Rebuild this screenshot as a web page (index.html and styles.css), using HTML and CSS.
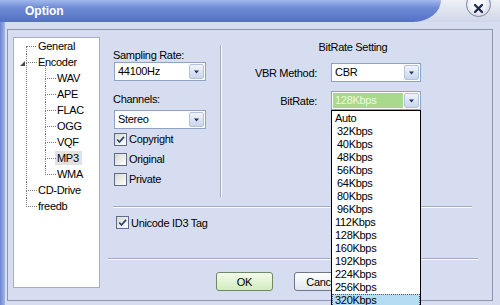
FILE: index.html
```html
<!DOCTYPE html>
<html lang="en">
<head>
    <meta charset="UTF-8">
    <title>Option</title>
    <link rel="stylesheet" href="styles.css">
</head>
<body>
    <div class="window">
        <div class="titlebar">
            <div class="caption">Option</div>
            <div class="close-area">
                <span class="close">
                    <svg width="11" height="11" viewBox="0 0 11 11"><path d="M2 2 L9 9 M9 2 L2 9" stroke="#1f2b4c" stroke-width="2.3" stroke-linecap="round"/></svg>
                </span>
            </div>
        </div>
        <div class="client">
            <div class="edge"></div>
            <div class="frame">
                <div class="tree">
                    <ul class="root">
                        <li>General</li>
                        <li><span class="expander"></span>Encoder
                            <ul class="children">
                                <li>WAV</li>
                                <li>APE</li>
                                <li>FLAC</li>
                                <li>OGG</li>
                                <li>VQF</li>
                                <li><span class="selected">MP3</span></li>
                                <li>WMA</li>
                            </ul>
                        </li>
                        <li>CD-Drive</li>
                        <li>freedb</li>
                    </ul>
                </div>

                <div class="pages">
                    <div class="settings">
                        <div class="col-left">
                            <div class="label">Sampling Rate:</div>
                            <div class="select">
                                <span class="value">44100Hz</span>
                                <span class="drop-btn"><svg width="5" height="4" viewBox="0 0 5 4"><path d="M0 0.5 L5 0.5 L2.5 3.5 Z" fill="#27365e"/></svg></span>
                            </div>
                            <div class="label channels">Channels:</div>
                            <div class="select stereo">
                                <span class="value">Stereo</span>
                                <span class="drop-btn"><svg width="5" height="4" viewBox="0 0 5 4"><path d="M0 0.5 L5 0.5 L2.5 3.5 Z" fill="#27365e"/></svg></span>
                            </div>
                            <div class="check">
                                <span class="box"><svg width="11" height="11" viewBox="0 0 11 11"><path d="M2.2 5.5 L4.5 8 L9 2.8" fill="none" stroke="#2b4674" stroke-width="1.8"/></svg></span>Copyright
                            </div>
                            <div class="check"><span class="box"></span>Original</div>
                            <div class="check"><span class="box"></span>Private</div>
                        </div>

                        <div class="vsep"></div>

                        <div class="col-right">
                            <div class="group-title">BitRate Setting</div>
                            <div class="form-grid">
                                <span class="form-label">VBR Method:</span>
                                <div class="select">
                                    <span class="value">CBR</span>
                                    <span class="drop-btn"><svg width="5" height="4" viewBox="0 0 5 4"><path d="M0 0.5 L5 0.5 L2.5 3.5 Z" fill="#27365e"/></svg></span>
                                </div>
                                <span class="form-label">BitRate:</span>
                                <div class="select">
                                    <span class="value active">128Kbps</span>
                                    <span class="drop-btn"><svg width="5" height="4" viewBox="0 0 5 4"><path d="M0 0.5 L5 0.5 L2.5 3.5 Z" fill="#27365e"/></svg></span>
                                </div>
                            </div>
                        </div>
                    </div>

                    <div class="hsep"></div>

                    <div class="check unicode">
                        <span class="box"><svg width="11" height="11" viewBox="0 0 11 11"><path d="M2.2 5.5 L4.5 8 L9 2.8" fill="none" stroke="#2b4674" stroke-width="1.8"/></svg></span>Unicode ID3 Tag
                    </div>

                    <div class="hsep wide"></div>

                    <div class="buttons">
                        <button class="btn ok">OK</button>
                        <button class="btn">Cancel</button>
                    </div>
                </div>
            </div>
        </div>

        <!-- open BitRate list -->
        <div class="droplist">
            <div class="item">Auto</div>
            <div class="item pad">32Kbps</div>
            <div class="item pad">40Kbps</div>
            <div class="item pad">48Kbps</div>
            <div class="item pad">56Kbps</div>
            <div class="item pad">64Kbps</div>
            <div class="item pad">80Kbps</div>
            <div class="item pad">96Kbps</div>
            <div class="item">112Kbps</div>
            <div class="item">128Kbps</div>
            <div class="item">160Kbps</div>
            <div class="item">192Kbps</div>
            <div class="item">224Kbps</div>
            <div class="item">256Kbps</div>
            <div class="item current">320Kbps</div>
        </div>
    </div>
</body>
</html>
```

FILE: styles.css
```css
:root {
    --face: #d6ddf1;
    --frame-line: #8d95b0;
    --etch-dark: #a2a9c0;
    --tree-dot: #7a7a7a;
    --field-border: #8ea2c4;
}
* {
    box-sizing: border-box;
}
body {
    margin: 0;
    font-family: "Liberation Sans", Arial, sans-serif;
    font-size: 11px;
    letter-spacing: -0.3px;
    color: #000;
    background: var(--face);
}
.window {
    width: 500px;
    height: 305px;
    position: relative;
    overflow: hidden;
    background: var(--face);
}

/* title bar */
.titlebar {
    height: 22px;
    display: flex;
    background: linear-gradient(#eef0f6, #cfd6e8);
}
.caption {
    width: 441px;
    border-bottom-right-radius: 28px 22px;
    background: linear-gradient(#a2b8ec 0%, #6e8bd6 35%, #5470c4 100%);
    color: #fff;
    font-weight: bold;
    font-size: 12px;
    letter-spacing: 0;
    line-height: 14px;
    padding: 4px 0 0 25px;
}
.close-area {
    flex: 1;
    display: flex;
    justify-content: flex-end;
    padding-right: 9px;
}
.close {
    width: 25px;
    height: 25px;
    margin-top: -8px;
    border-radius: 50%;
    border: 1px solid #7b849e;
    background: radial-gradient(circle at 45% 40%, #ffffff 0%, #eef0f6 50%, #c4cadb 100%);
    display: flex;
    align-items: center;
    justify-content: center;
    padding-top: 7px;
}

/* client area */
.client {
    display: flex;
    height: 283px;
}
.edge {
    width: 5px;
    background: linear-gradient(90deg, #6a86d0, #a3b6e4);
}
.frame {
    width: 486px;
    height: 272px;
    margin: 7px 0 0 2px;
    border: 1px solid var(--frame-line);
    padding: 7px 0 11px 5px;
    display: flex;
}

/* tree */
.tree {
    width: 87px;
    height: 251px;
    border: 1px solid #a7aec4;
    background: #fff;
}
.tree ul {
    list-style: none;
    margin: 0;
    padding: 0;
}
.tree li {
    position: relative;
    padding-left: 12px;
    line-height: 16px;
    white-space: nowrap;
}
.tree li::before {
    content: '';
    position: absolute;
    left: 0;
    top: 0;
    width: 10px;
    height: 8px;
    border-left: 1px dotted var(--tree-dot);
    border-bottom: 1px dotted var(--tree-dot);
}
.tree li::after {
    content: '';
    position: absolute;
    left: 0;
    top: 8px;
    bottom: 0;
    border-left: 1px dotted var(--tree-dot);
}
.tree li:last-child::after {
    display: none;
}
.root {
    margin-left: 12px !important;
}
.root > li:first-child::before {
    border-left: none;
}
.children {
    margin-left: 7px !important;
}
.children > li:first-child::before {
    top: -4px;
    height: 12px;
}
.expander {
    position: absolute;
    left: -6px;
    top: 7px;
    width: 0;
    height: 0;
    border-left: 5px solid transparent;
    border-bottom: 5px solid #4a4a4a;
}
.selected {
    background: #e2e2e2;
    margin-left: -2px;
    padding: 1px 3px 1px 2px;
}

/* option page */
.pages {
    flex: 1;
    padding-left: 13px;
}
.settings {
    display: flex;
    height: 169px;
}
.col-left {
    width: 107px;
    padding-top: 12px;
}
.label {
    line-height: 13px;
}
.label.channels {
    margin-top: 12px;
}
.select {
    width: 92px;
    height: 19px;
    margin-left: 1px;
    border: 1px solid var(--field-border);
    background: #fff;
    display: flex;
    align-items: center;
    padding: 1px;
}
.select.stereo {
    margin-top: 4px;
}
.value {
    flex: 1;
    height: 100%;
    line-height: 15px;
    padding-left: 2px;
}
.value.active {
    background: #a9d98c;
    color: #eef8e6;
    margin-right: 1px;
}
.drop-btn {
    width: 15px;
    height: 15px;
    border: 1px solid #b6c2da;
    border-radius: 2px;
    background: linear-gradient(#f0f4fc, #c9d5ee);
    display: flex;
    align-items: center;
    justify-content: center;
}
.check {
    height: 20px;
    display: flex;
    align-items: center;
    padding-left: 1px;
}
.box {
    width: 13px;
    height: 13px;
    margin-right: 2px;
    border: 1px solid #5d6c8a;
    background: linear-gradient(135deg, #d8d9d4, #ffffff);
    display: flex;
    align-items: center;
    justify-content: center;
}
.vsep {
    width: 2px;
    height: 152px;
    margin-top: 8px;
    border-left: 1px solid var(--etch-dark);
    border-right: 1px solid #fff;
}
.col-right {
    flex: 1;
    padding: 4px 8px 0 0;
}
.group-title {
    text-align: center;
    line-height: 13px;
}
.form-grid {
    display: grid;
    grid-template-columns: 95px 90px;
    column-gap: 14px;
    row-gap: 9px;
    margin-top: 9px;
}
.form-grid .select {
    width: 90px;
    margin-left: 0;
}
.form-label {
    text-align: right;
    align-self: center;
}
.hsep {
    width: 359px;
    height: 2px;
    border-top: 1px solid var(--etch-dark);
    border-bottom: 1px solid #fff;
}
.hsep.wide {
    width: 370px;
    margin: 28px 0 0 -5px;
}
.check.unicode {
    height: 15px;
    margin-top: 7px;
    padding-left: 3px;
}
.buttons {
    display: flex;
    gap: 21px;
    margin-top: 12px;
    padding-left: 103px;
}
.btn {
    width: 57px;
    height: 19px;
    padding: 0;
    font: inherit;
    letter-spacing: inherit;
    color: #000;
    border: 1px solid #6f778c;
    border-radius: 3px;
    background: linear-gradient(#ffffff, #e2e6ee);
}
.btn.ok {
    border-color: #6d8a62;
    background: linear-gradient(#f4fbec, #d2ebbd);
}

/* dropdown list of the BitRate combo */
.droplist {
    position: absolute;
    left: 331px;
    top: 110px;
    width: 90px;
    height: 200px;
    border: 1px solid #000;
    background: #fff;
    padding-top: 1px;
}
.item {
    height: 13px;
    line-height: 13px;
    padding-left: 3px;
}
.item.pad {
    padding-left: 5px;
}
.item.current {
    background: #b4dcf2;
    outline: 1px dotted #556;
    outline-offset: -1px;
}
```
